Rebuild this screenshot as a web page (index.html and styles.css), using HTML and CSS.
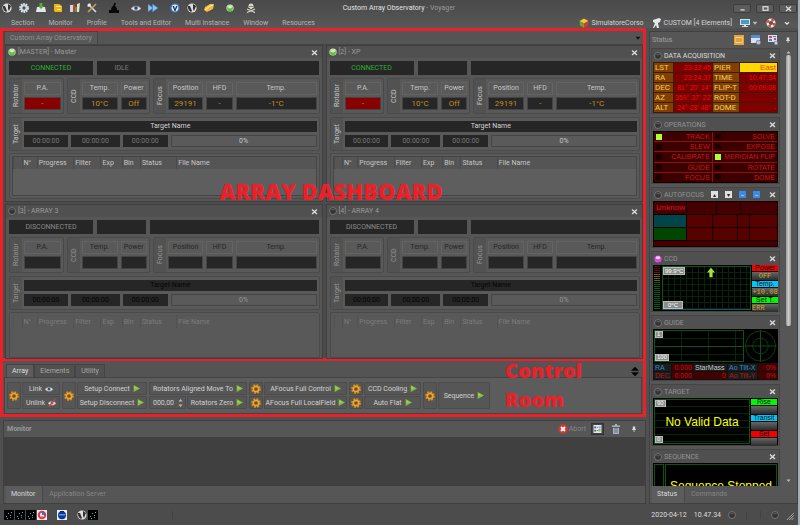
FILE: index.html
```html
<!DOCTYPE html>
<html lang="en">
<head>
<meta charset="utf-8">
<title>Custom Array Observatory - Voyager</title>
<link rel="stylesheet" href="styles.css">
</head>
<body>
<svg class="defs" aria-hidden="true">
  <symbol id="globe" viewBox="0 0 10 10"><circle cx="5" cy="5" r="4.6" fill="#ddd"/><path d="M1 3l2 0 2 5-1 1C2 8 1 6 1 4zM6 1l3 2-2 5-1-2z" fill="#333"/></symbol>
  <symbol id="blueglobe" viewBox="0 0 10 10"><circle cx="5" cy="5" r="4.8" fill="#2f6fbe"/><circle cx="5" cy="5" r="3.4" fill="#dfe9f5"/><path d="M2.500 3h1.500l1 3 1-3h1.500L5.500 8h-1z" fill="#234"/></symbol>
  <symbol id="cog" viewBox="0 0 10 10"><circle cx="5" cy="5" r="3.9" fill="none" stroke="#e6edf5" stroke-width="2" stroke-dasharray="1.6 .85"/><circle cx="5" cy="5" r="2.6" fill="none" stroke="#cfdbe8" stroke-width="1.9"/></symbol>
  <symbol id="gear" viewBox="0 0 10 10"><circle cx="5" cy="5" r="3.8" fill="none" stroke="#e08a10" stroke-width="2.2" stroke-dasharray="1.7 1.28"/><circle cx="5" cy="5" r="2.7" fill="none" stroke="#f8a41c" stroke-width="1.7"/></symbol>
  <symbol id="tray" viewBox="0 0 10 10"><path d="M1 4h8l1 5H0z" fill="#e4e6e8"/><path d="M3.500 0h3v3H8L5 6 2 3h1.500z" fill="#58a83a"/></symbol>
  <symbol id="folder" viewBox="0 0 10 10"><path d="M1 1l5 0 3 2v6H2L1 8z" fill="#f4b40c"/><path d="M3 3h5v1H3zM4 6h4v1H4z" fill="#fff1a8"/></symbol>
  <symbol id="books" viewBox="0 0 10 10"><path d="M0 2h3v7H0z" fill="#c9d8e3"/><path d="M3 1h2v8H3z" fill="#d33a28"/><path d="M5 4h2v5H5z" fill="#4b9a46"/><path d="M7 1l3-1-1 9H7z" fill="#e9dccb"/></symbol>
  <symbol id="tools" viewBox="0 0 10 10"><path d="M1 1l8 8" stroke="#ddd" stroke-width="1.600"/><path d="M9 1L1 9" stroke="#caa15a" stroke-width="1.600"/><path d="M0 3l3-3 1 2-2 2z" fill="#eee"/></symbol>
  <symbol id="dome" viewBox="0 0 10 10"><path d="M0 10V7h2C2 4 5 3 5 0h2l-1 3c2 1 2 3 2 4h2v3z" fill="#080808"/></symbol>
  <symbol id="eye" viewBox="0 0 10 10"><path d="M0 5.500C2 2 8 2 10 5.500 8 8.500 2 8.500 0 5.500z" fill="#e6e6ea" stroke="#9a6a50" stroke-width=".6"/><circle cx="5" cy="5" r="2" fill="#3f74b8"/><circle cx="5" cy="5" r=".8" fill="#112"/></symbol>
  <symbol id="noeye" viewBox="0 0 10 10"><path d="M0 5.500C2 2 8 2 10 5.500 8 8.500 2 8.500 0 5.500z" fill="#e6e6ea" stroke="#9a6a50" stroke-width=".6"/><circle cx="5" cy="5" r="1.800" fill="#3f74b8"/><path d="M1 9.500L9 .5" stroke="#d6403a" stroke-width="1.600"/></symbol>
  <symbol id="ffwd" viewBox="0 0 10 10"><path d="M0 1l5 4-5 4zM4.500 1l5.500 4-5.500 4z" fill="#8fc2f0" stroke="#3a7ec4" stroke-width=".6"/></symbol>
  <symbol id="tag" viewBox="0 0 10 10"><path d="M0 7l1-3 5-3 4 0-1 5-6 3z" fill="#f2bb3c"/><path d="M1 7l5-4 3-1" stroke="#fff2bd" fill="none"/></symbol>
  <symbol id="green" viewBox="0 0 10 10"><circle cx="5" cy="5" r="4.500" fill="#dfe9dc"/><circle cx="5" cy="5.500" r="3.600" fill="#62c332"/><ellipse cx="5" cy="3.800" rx="2.500" ry="1.700" fill="#d5f5c0"/></symbol>
  <symbol id="dark" viewBox="0 0 10 10"><circle cx="5" cy="5" r="4.300" fill="#333" stroke="#8a8a8a" stroke-width=".9"/><path d="M3 3.400h4" stroke="#6c6c6c"/></symbol>
  <symbol id="pink" viewBox="0 0 10 10"><circle cx="5" cy="5" r="4.500" fill="#d94be0"/><ellipse cx="5" cy="3.500" rx="2.800" ry="1.800" fill="#fbd3fc"/></symbol>
  <symbol id="skull" viewBox="0 0 10 10"><path d="M2.500 3a2.500 2.500 0 015 0v2H6v1H4V5H2.500z" fill="#ddd8c8"/><path d="M1 6l8 3.500M9 6L1 9.500" stroke="#ddd8c8" stroke-width="1.200"/><path d="M3.500 3h1v1h-1zM5.500 3h1v1h-1z" fill="#333"/></symbol>
  <symbol id="cube" viewBox="0 0 10 10"><path d="M5 .5L9.500 3 5 5.500.5 3z" fill="#f5c43c"/><path d="M.5 3L5 5.500V10L1 7.500z" fill="#69a82e"/><path d="M9.500 3L5 5.500V10l4-2.500z" fill="#d83b2a"/></symbol>
  <symbol id="scope" viewBox="0 0 10 10"><path d="M1 2l6-2 2 1-1 3-2 1 1 5H5L4 7l-2 3H1l2-5-2-1z" fill="#e8e8e8"/></symbol>
  <symbol id="screen" viewBox="0 0 10 10"><path d="M0 1h10v6H0z" fill="#d5e2ea"/><path d="M1 2h8v4H1z" fill="#3fa0c4"/><path d="M4 7h2v1h2v1H2V8h2z" fill="#ddd"/></symbol>
  <symbol id="buoy" viewBox="0 0 10 10"><circle cx="5" cy="5" r="3.300" fill="none" stroke="#eee" stroke-width="2.400"/><circle cx="5" cy="5" r="3.300" fill="none" stroke="#de4630" stroke-width="2.400" stroke-dasharray="2.600 2.580"/></symbol>
  <symbol id="chev" viewBox="0 0 10 10"><path d="M1.500 3.500L5 7l3.500-3.500" stroke="#eee" stroke-width="1.800" fill="none"/></symbol>
  <symbol id="x" viewBox="0 0 10 10"><path d="M1.500 2l7 6.500M8.500 2l-7 6.500" stroke="#ddd" stroke-width="1.900"/></symbol>
  <symbol id="min" viewBox="0 0 10 10"><path d="M2 7h6" stroke="#ddd" stroke-width="1.800"/></symbol>
  <symbol id="max" viewBox="0 0 10 10"><rect x="1.500" y="2.500" width="7" height="5" fill="none" stroke="#ddd" stroke-width="1.800"/></symbol>
  <symbol id="play" viewBox="0 0 10 10"><path d="M1 0l9 5-9 5z" fill="#83bd3e"/><path d="M2 2l5 3H2z" fill="#a9d86c"/></symbol>
  <symbol id="pin" viewBox="0 0 10 10"><path d="M3 1h4v4h1v1.500H5.600V10H4.400V6.500H2V5h1z" fill="#ddd"/></symbol>
  <symbol id="down" viewBox="0 0 10 10"><path d="M1 3h8L5 8z" fill="#111"/></symbol>
  <symbol id="downl" viewBox="0 0 10 10"><path d="M1 3h8L5 8z" fill="#bbb"/></symbol>
  <symbol id="upl" viewBox="0 0 10 10"><path d="M1 7h8L5 2z" fill="#bbb"/></symbol>
  <symbol id="updown" viewBox="0 0 10 12"><path d="M0 5h10L5 0zM0 7h10l-5 5z" fill="#050505"/></symbol>
  <symbol id="abort" viewBox="0 0 10 10"><circle cx="5" cy="5" r="4.900" fill="#c93a34"/><path d="M3 3l4 4M7 3L3 7" stroke="#fff" stroke-width="1.800"/></symbol>
  <symbol id="list" viewBox="0 0 10 10"><path d="M0 0h10v10H0z" fill="#dfe6f2"/><path d="M1 2h2v2H1zM1 6h2v2H1z" fill="#456"/><path d="M4 3h2M4 7h2" stroke="#567"/><path d="M7 2h2v2H7z" fill="#6b9be0"/><path d="M6 5h3v3H6z" fill="#9cbf3c"/></symbol>
  <symbol id="bin" viewBox="0 0 10 10"><path d="M1 1.500h8V3H1zM2 4h6v6H2zM4 0h2v2H4z" fill="#aab1bf"/><path d="M4 4v5M6 4v5" stroke="#5b6270" stroke-width=".8"/></symbol>
  <symbol id="orange" viewBox="0 0 10 10"><path d="M0 0h10v10H0z" fill="#e9a236"/><path d="M1.500 2h7v6h-7z" fill="#f9d58c"/><path d="M3 3v4M5 3v4M7 3v4" stroke="#b56f10"/></symbol>
  <symbol id="win" viewBox="0 0 10 10"><path d="M0 0h9v8H0z" fill="#d5e2f4"/><path d="M0 0h9v3H0z" fill="#4f8ed6"/><circle cx="7.500" cy="7.500" r="2.300" fill="#b6bfcb" stroke="#4e678b" stroke-width=".6"/></symbol>
  <symbol id="winr" viewBox="0 0 10 10"><path d="M0 0h9v7H0z" fill="#d5e2f4"/><path d="M1 1h3v2H1zM6 3h2v2H6z" fill="#d24d3d"/><path d="M5 1h3v1H5zM1 4h3v2H1z" fill="#4f7bd0"/><circle cx="8" cy="8" r="1.900" fill="#c9d2e0" stroke="#55698b" stroke-width=".6"/></symbol>
  <symbol id="stars" viewBox="0 0 10 10"><path d="M0 0h10v10H0z" fill="#020304"/><path d="M2 6h1v1H2zM4 3h1v1H4zM6 5h1v1H6z" fill="#8aa"/><path d="M3 8h1v1H3zM7 2h1v1H7z" fill="#5c7"/><path d="M6 7h1v1H6z" fill="#57c"/></symbol>
  <symbol id="gball" viewBox="0 0 10 10"><path d="M0 0h10v10H0z" fill="#f2e9ee"/><circle cx="5" cy="5" r="3.200" fill="none" stroke="#d83a48" stroke-width="2"/><path d="M5 2a3 3 0 013 3H5z" fill="#3570d0"/><path d="M3 6h3v2z" fill="#ee8a2c"/></symbol>
  <symbol id="bball" viewBox="0 0 10 10"><path d="M0 0h10v10H0z" fill="#e4f2f8"/><circle cx="5" cy="5.300" r="4" fill="#1a2fa0"/><path d="M2 4h6v1.500H2z" fill="#1fb3d8"/><path d="M3 1h4v1H3z" fill="#224"/></symbol>
</svg>

<div class="app">
  <header class="ribbon">
    <div class="titlebar">
      <div class="quick">
        <svg><use href="#globe"/></svg><svg><use href="#cog"/></svg><svg><use href="#tray"/></svg><svg><use href="#folder"/></svg><svg><use href="#books"/></svg><svg><use href="#tools"/></svg><svg class="gapped"><use href="#dome"/></svg><svg class="gapped"><use href="#eye"/></svg><svg><use href="#ffwd"/></svg><svg class="gapped"><use href="#blueglobe"/></svg><svg><use href="#globe"/></svg><svg><use href="#tag"/></svg><svg class="gapped small"><use href="#green"/></svg><svg class="gapped"><use href="#skull"/></svg>
      </div>
      <h1 class="title">Custom Array Observatory <span>- Voyager</span></h1>
      <div class="winbtns">
        <button aria-label="Minimize"><svg><use href="#min"/></svg></button>
        <button aria-label="Maximize"><svg><use href="#max"/></svg></button>
        <button aria-label="Close"><svg><use href="#x"/></svg></button>
      </div>
    </div>
    <nav class="menubar">
      <div class="menus"><a href="#">Section</a><a href="#">Monitor</a><a href="#">Profile</a><a href="#">Tools and Editor</a><a href="#">Multi Instance</a><a href="#">Window</a><a href="#">Resources</a></div>
      <div class="tools">
        <button><svg><use href="#cube"/></svg>SimulatoreCorso</button>
        <button><svg><use href="#scope"/></svg>CUSTOM [4 Elements]</button>
        <button aria-label="Display"><svg><use href="#screen"/></svg><svg class="tiny"><use href="#downl"/></svg></button>
        <button aria-label="Help"><svg><use href="#buoy"/></svg></button>
        <button aria-label="More"><svg class="tiny"><use href="#chev"/></svg></button>
      </div>
    </nav>
  </header>

  <div class="body">
    <main class="work">
      <section class="dashboard">
        <div class="doctabs"><button class="tab">Custom Array Observatory</button><svg class="tiny"><use href="#down"/></svg></div>
        <div class="panels">
          <article class="panel">
            <header class="phead"><svg><use href="#green"/></svg><h2>[MASTER] - Master</h2><button aria-label="Close"><svg><use href="#x"/></svg></button></header>
            <div class="state"><div class="box on">CONNECTED</div><div class="box idle">IDLE</div><div class="box"></div></div>
            <div class="groups">
              <div class="group rot"><span class="side">Rotator</span><div class="cells"><b>P.A.</b><i class="alert">-</i></div></div>
              <div class="group ccd"><span class="side">CCD</span><div class="cells"><b>Temp.</b><b>Power</b><i>10°C</i><i>Off</i></div></div>
              <div class="group foc"><span class="side">Focus</span><div class="cells"><b>Position</b><b>HFD</b><b>Temp.</b><i>29191</i><i>-</i><i>-1°C</i></div></div>
            </div>
            <div class="group target"><span class="side">Target</span><div class="tcells"><div class="tname">Target Name</div><i>00:00:00</i><i>00:00:00</i><i>00:00:00</i><div class="prog">0%</div></div></div>
            <div class="group seq"><table><thead><tr><th></th><th>N°</th><th>Progress</th><th>Filter</th><th>Exp</th><th>Bin</th><th>Status</th><th>File Name</th></tr></thead></table></div>
          </article>
          <article class="panel">
            <header class="phead"><svg><use href="#green"/></svg><h2>[2] - XP</h2><button aria-label="Close"><svg><use href="#x"/></svg></button></header>
            <div class="state"><div class="box on">CONNECTED</div><div class="box"></div><div class="box"></div></div>
            <div class="groups">
              <div class="group rot"><span class="side">Rotator</span><div class="cells"><b>P.A.</b><i class="alert">-</i></div></div>
              <div class="group ccd"><span class="side">CCD</span><div class="cells"><b>Temp.</b><b>Power</b><i>10°C</i><i>Off</i></div></div>
              <div class="group foc"><span class="side">Focus</span><div class="cells"><b>Position</b><b>HFD</b><b>Temp.</b><i>29191</i><i>-</i><i>-1°C</i></div></div>
            </div>
            <div class="group target"><span class="side">Target</span><div class="tcells"><div class="tname">Target Name</div><i>00:00:00</i><i>00:00:00</i><i>00:00:00</i><div class="prog">0%</div></div></div>
            <div class="group seq"><table><thead><tr><th></th><th>N°</th><th>Progress</th><th>Filter</th><th>Exp</th><th>Bin</th><th>Status</th><th>File Name</th></tr></thead></table></div>
          </article>
          <article class="panel off">
            <header class="phead"><svg><use href="#dark"/></svg><h2>[3] - ARRAY 3</h2><button aria-label="Close"><svg><use href="#x"/></svg></button></header>
            <div class="state"><div class="box">DISCONNECTED</div><div class="box"></div><div class="box"></div></div>
            <div class="groups">
              <div class="group rot"><span class="side">Rotator</span><div class="cells"><b>P.A.</b><i></i></div></div>
              <div class="group ccd"><span class="side">CCD</span><div class="cells"><b>Temp.</b><b>Power</b><i></i><i></i></div></div>
              <div class="group foc"><span class="side">Focus</span><div class="cells"><b>Position</b><b>HFD</b><b>Temp.</b><i></i><i></i><i></i></div></div>
            </div>
            <div class="group target"><span class="side">Target</span><div class="tcells"><div class="tname">Target Name</div><i>00:00:00</i><i>00:00:00</i><i>00:00:00</i><div class="prog">0%</div></div></div>
            <div class="group seq"><table><thead><tr><th></th><th>N°</th><th>Progress</th><th>Filter</th><th>Exp</th><th>Bin</th><th>Status</th><th>File Name</th></tr></thead></table></div>
          </article>
          <article class="panel off">
            <header class="phead"><svg><use href="#dark"/></svg><h2>[4] - ARRAY 4</h2><button aria-label="Close"><svg><use href="#x"/></svg></button></header>
            <div class="state"><div class="box">DISCONNECTED</div><div class="box"></div><div class="box"></div></div>
            <div class="groups">
              <div class="group rot"><span class="side">Rotator</span><div class="cells"><b>P.A.</b><i></i></div></div>
              <div class="group ccd"><span class="side">CCD</span><div class="cells"><b>Temp.</b><b>Power</b><i></i><i></i></div></div>
              <div class="group foc"><span class="side">Focus</span><div class="cells"><b>Position</b><b>HFD</b><b>Temp.</b><i></i><i></i><i></i></div></div>
            </div>
            <div class="group target"><span class="side">Target</span><div class="tcells"><div class="tname">Target Name</div><i>00:00:00</i><i>00:00:00</i><i>00:00:00</i><div class="prog">0%</div></div></div>
            <div class="group seq"><table><thead><tr><th></th><th>N°</th><th>Progress</th><th>Filter</th><th>Exp</th><th>Bin</th><th>Status</th><th>File Name</th></tr></thead></table></div>
          </article>
        </div>
        <div class="note note-dash">ARRAY DASHBOARD</div>
      </section>

      <section class="control">
        <div class="ctabs"><button class="active">Array</button><button>Elements</button><button>Utility</button><svg><use href="#updown"/></svg></div>
        <div class="actions">
          <div class="act a1"><span class="gear tall"><svg><use href="#gear"/></svg></span><button>Link <svg class="wide-icon"><use href="#eye"/></svg></button><button>Unlink <svg class="wide-icon"><use href="#noeye"/></svg></button></div>
          <div class="act a2"><span class="gear tall"><svg><use href="#gear"/></svg></span><button>Setup Connect <svg><use href="#play"/></svg></button><button>Setup Disconnect <svg><use href="#play"/></svg></button></div>
          <div class="act a3"><button class="wide">Rotators Aligned Move To <svg><use href="#play"/></svg></button><label class="spin"><input type="text" value="000,00" aria-label="Rotator angle"><span><svg><use href="#upl"/></svg><svg><use href="#downl"/></svg></span></label><button>Rotators Zero <svg><use href="#play"/></svg></button></div>
          <div class="act a4"><span class="gear"><svg><use href="#gear"/></svg></span><button>AFocus Full Control <svg><use href="#play"/></svg></button><span class="gear"><svg><use href="#gear"/></svg></span><button>AFocus Full LocalField <svg><use href="#play"/></svg></button></div>
          <div class="act a5"><span class="gear"><svg><use href="#gear"/></svg></span><button>CCD Cooling <svg><use href="#play"/></svg></button><span class="gear"><svg><use href="#gear"/></svg></span><button>Auto Flat <svg><use href="#play"/></svg></button></div>
          <div class="act a6"><span class="gear tall"><svg><use href="#gear"/></svg></span><button class="tall">Sequence <svg><use href="#play"/></svg></button></div>
        </div>
        <div class="note note-control">Control<br>Room</div>
      </section>

      <section class="monitor">
        <header><h2>Monitor</h2><button class="abort"><svg><use href="#abort"/></svg>Abort</button><button class="pressed" aria-label="Details"><svg><use href="#list"/></svg></button><button aria-label="Clear"><svg><use href="#bin"/></svg></button><button aria-label="Pin"><svg class="tiny"><use href="#pin"/></svg></button></header>
        <div class="log"></div>
        <div class="btabs"><button class="active">Monitor</button><button>Application Server</button></div>
      </section>
    </main>

    <aside class="status">
      <header class="shead"><h2>Status</h2><svg><use href="#orange"/></svg><svg><use href="#win"/></svg><svg><use href="#winr"/></svg><svg class="tiny"><use href="#pin"/></svg></header>
      <div class="scroll">
        <div class="stack">
          <section class="widget lit">
            <header><svg><use href="#dark"/></svg><h3>DATA ACQUISITION</h3><button aria-label="Close"><svg><use href="#x"/></svg></button></header>
            <table class="acq">
              <tr><th>LST</th><td>23:33:45</td><th>PIER</th><td class="east">East</td></tr>
              <tr><th>RA</th><td>23:24:37</td><th>TIME</th><td>10.47.34</td></tr>
              <tr><th>DEC</th><td>81° 20' 14"</td><th>FLIP-T</th><td>00:09:08</td></tr>
              <tr><th>AZ</th><td>359° 37' 22"</td><th>ROT-D</th><td>-</td></tr>
              <tr><th>ALT</th><td>24° 28' 48"</td><th>DOME</th><td>-</td></tr>
            </table>
          </section>
          <section class="widget">
            <header><svg><use href="#dark"/></svg><h3>OPERATIONS</h3><button aria-label="Close"><svg><use href="#x"/></svg></button></header>
            <ul class="ops"><li class="hot">TRACK</li><li>SOLVE</li><li>SLEW</li><li>EXPOSE</li><li>CALIBRATE</li><li class="hot">MERIDIAN FLIP</li><li>GUIDE</li><li>ROTATE</li><li>FOCUS</li><li>DOME</li></ul>
          </section>
          <section class="widget">
            <header><svg><use href="#dark"/></svg><h3>AUTOFOCUS</h3><span class="chips"><em>▴</em><em>▾</em><em class="blue">–</em><em class="blue">–</em></span><button aria-label="Close"><svg><use href="#x"/></svg></button></header>
            <div class="af">
              <div class="r1"><span>Unknow</span><span></span><span></span><span></span></div>
              <div class="r2"><span class="teal"></span><span></span><span></span><span></span><span></span></div>
              <div class="r2"><span class="grn"></span><span></span><span></span><span></span><span></span></div>
              <div class="r3"></div>
            </div>
          </section>
          <section class="widget">
            <header><svg><use href="#pink"/></svg><h3>CCD</h3><button aria-label="Close"><svg><use href="#x"/></svg></button></header>
            <div class="ccdview">
              <div class="meter"></div>
              <div class="plot"><span class="lab">99.9°C</span><svg class="arrow" viewBox="0 0 10 12"><path d="M5 0l5 6H7v6H3V6H0z" fill="#a8e03a"/></svg><span class="lab low">0°C</span></div>
              <div class="keys"><span class="red">Power</span><span class="lcd">OFF</span><span class="cyan">Temp.</span><span class="lcd">+10.08</span><span class="lime">Set T.</span><span class="lcd left">ERR</span></div>
            </div>
          </section>
          <section class="widget">
            <header><svg><use href="#dark"/></svg><h3>GUIDE</h3><button aria-label="Close"><svg><use href="#x"/></svg></button></header>
            <div class="guide">
              <div class="gplots">
                <div class="gplot"><span class="lab">1</span><span class="lab">100</span></div>
                <svg viewBox="0 0 33 33"><path d="M0 16.500h33M16.500 0v33" stroke="#0b5512"/><g fill="none" stroke="#0a4010"><circle cx="16.500" cy="16.500" r="8"/><circle cx="16.500" cy="16.500" r="15.500"/></g></svg>
              </div>
              <table><tr><td class="ra">RA</td><td class="v">0.000</td><td class="sm">StarMass</td><td class="ra">Ao Tilt-X</td><td class="v">0%</td></tr><tr><td class="de">DEC</td><td class="v">0.000</td><td class="v">0</td><td class="de">Ao Tilt-Y</td><td class="v">0%</td></tr></table>
            </div>
          </section>
          <section class="widget">
            <header><svg><use href="#dark"/></svg><h3>TARGET</h3><button aria-label="Close"><svg><use href="#x"/></svg></button></header>
            <div class="tgt">
              <div class="tplot"><span class="lab">90</span><strong>No Valid Data</strong><span class="lab">0</span></div>
              <div class="keys"><span class="lime">Rise</span><span class="lcd"></span><span class="cyan">Transit</span><span class="lcd"></span><span class="red">Set</span><span class="lcd"></span></div>
            </div>
          </section>
          <section class="widget">
            <header><svg><use href="#dark"/></svg><h3>SEQUENCE</h3><button aria-label="Close"><svg><use href="#x"/></svg></button></header>
            <div class="sq"><span></span><strong>Sequence Stopped</strong></div>
          </section>
        </div>
        <div class="bar"><svg><use href="#upl"/></svg><div class="rail"><span class="thumb"></span></div><svg><use href="#downl"/></svg></div>
      </div>
      <div class="btabs"><button class="active">Status</button><button>Commands</button></div>
    </aside>
  </div>

  <footer class="foot">
    <div class="fleft"><svg><use href="#stars"/></svg><svg><use href="#stars"/></svg><svg><use href="#stars"/></svg><svg><use href="#gball"/></svg><svg class="far"><use href="#bball"/></svg><svg class="far"><use href="#globe"/></svg><svg><use href="#stars"/></svg></div>
    <span class="sep"></span>
    <div class="fright"><time>2020-04-12</time><time>10.47.34</time><svg><use href="#dark"/></svg><span class="sep"></span><span class="sep"></span><svg><use href="#dark"/></svg><svg class="grip" viewBox="0 0 10 10"><path d="M1 10l9-9M4 10l6-6M7 10l3-3" stroke="#bbb"/></svg></div>
  </footer>
</div>
</body>
</html>
```
FILE: styles.css
```css
* { box-sizing: border-box; }
body { margin: 0; background: #505050; color: #c6c6c6; font: 7px/10px Roboto, "Liberation Sans", sans-serif; }
h1, h2, h3, ul { margin: 0; padding: 0; font: inherit; list-style: none; }
button, input { margin: 0; padding: 0; border: 0; background: none; color: inherit; font: inherit; }
a { color: inherit; text-decoration: none; }
b, i, em, strong { font-weight: 400; font-style: normal; }
svg { display: block; width: 10px; height: 10px; flex: none; }
svg.tiny { width: 6px; height: 6px; }
.defs { position: absolute; width: 0; height: 0; }
table { border-collapse: collapse; }

.app { height: 100vh; min-height: 525px; display: flex; flex-direction: column; border-right: 2px solid #a8adb2; overflow: hidden; background: #505050; }
.ribbon { height: 28px; background: linear-gradient(#494949, #585858); }
.titlebar { display: grid; grid-template-columns: 1fr auto 1fr; height: 16px; align-items: center; }
.quick { display: flex; align-items: center; gap: 8px; padding-left: 2px; }
.quick svg { margin-right: -1px; }
.quick .gapped { margin-left: 5px; }
.quick .small { width: 8px; height: 8px; }
.title { color: #e2e2e2; }
.title span { color: #999; }
.winbtns { display: flex; justify-content: flex-end; gap: 5px; padding-right: 1px; }
.winbtns button { display: grid; place-items: center; width: 18px; height: 9px; border: 1px solid #3e3e3e; border-radius: 2px; background: #5c5c5c; }
.winbtns svg { width: 7px; height: 7px; }
.menubar { display: flex; justify-content: space-between; align-items: center; height: 13px; color: #b4b4b4; }
.menus { display: flex; gap: 14px; padding-left: 11px; }
.tools { display: flex; align-items: center; gap: 8px; padding-right: 8px; color: #d4d4d4; }
.tools button { display: flex; align-items: center; gap: 2px; }

.body { flex: 1; min-height: 0; display: flex; gap: 3px; }
.work { flex: 1; min-width: 0; display: flex; flex-direction: column; }

.dashboard { position: relative; height: 333px; border: 3px solid #ec2028; padding-left: 1px; background: #4b4b4b; }
.doctabs { display: flex; justify-content: space-between; align-items: center; height: 14px; padding-right: 2px; background: #545454; border-bottom: 1px solid #444; color: #929292; }
.tab { height: 13px; padding: 0 5px; border: 1px solid #454545; border-bottom: 0; background: #585858; }
.panels { display: grid; grid-template-columns: 1fr 1fr; grid-template-rows: 157px 155px; gap: 2px 3px; padding-left: 1px; }
.panel { border: 1px solid #3f3f3f; background: #565656; padding: 0 2px 0 3px; min-width: 0; display: flex; flex-direction: column; overflow: hidden; }
.phead { display: flex; align-items: center; gap: 2px; height: 12px; margin: 0 -2px 0 -3px; padding: 0 4px 0 2px; background: #505050; color: #9a9a9a; }
.phead svg { width: 8px; height: 8px; }
.phead h2 { flex: 1; }
.phead button svg { width: 7px; height: 7px; }
.state { display: grid; grid-template-columns: 84fr 49fr 169fr; gap: 4px; margin-top: 3px; }
.box { height: 14px; background: #262626; color: #7c7c7c; text-align: center; line-height: 14px; }
.box.on { color: #2fae3a; }
.groups { display: grid; grid-template-columns: 55fr 84fr 168fr; gap: 3px; margin-top: 3px; }
.group { display: flex; border: 1px solid #4a4a4a; border-radius: 2px; padding: 3px 2px 3px 0; background: #595959; min-width: 0; }
.side { display: grid; place-items: center; flex: none; width: 12px; margin: -3px 2px -3px 0; background: #525252; line-height: 12px; writing-mode: vertical-rl; transform: rotate(180deg); }
.cells { flex: 1; display: grid; gap: 2px 3px; }
.cells b { height: 13px; border: 1px solid #636363; text-align: center; line-height: 11px; }
.cells i { height: 13px; border: 1px solid #444; background: #262626; color: #c08d20; text-align: center; font-size: 8px; line-height: 11px; }
.cells .alert { background: #890000; }
.ccd .cells { grid-template-columns: 37fr 27fr; }
.foc .cells { grid-template-columns: 36fr 27fr 82fr; }
.target { margin-top: 3px; }
.tcells { flex: 1; display: grid; grid-template-columns: 44fr 49fr 45fr 146fr; gap: 3px; }
.tname { grid-column: 1 / -1; height: 11px; background: #262626; color: #d4d4d4; text-align: center; line-height: 11px; }
.tcells i { height: 12px; background: #262626; color: #7a7a7a; text-align: center; line-height: 12px; }
.prog { border: 1px solid #454545; border-radius: 1px; background: #5a5a5a; text-align: center; line-height: 10px; }
.seq { height: 46px; margin-top: 2px; padding: 2px; }
.seq table { width: 100%; height: 40px; table-layout: fixed; border: 1px solid #464646; background: #5e5e5e; }
.seq tr { vertical-align: top; }
.seq th { padding: 0 0 0 2px; text-align: left; font-weight: 400; line-height: 12px; background: linear-gradient(#4a4a4a, #4a4a4a) 0 0 / 1px 12px no-repeat, linear-gradient(#555, #555) 0 0 / 100% 12px no-repeat; white-space: nowrap; }
.seq th:nth-child(1) { width: 3%; }
.seq th:nth-child(2) { width: 5%; }
.seq th:nth-child(3) { width: 12%; }
.seq th:nth-child(4) { width: 9%; }
.seq th:nth-child(5) { width: 7%; }
.seq th:nth-child(6) { width: 6%; }
.seq th:nth-child(7) { width: 12%; }
.off .box { color: #8c8c8c; }
.off .side, .off .prog { color: #949494; }
.off .cells b { color: #262626; }
.off .tname, .off .tcells i { color: #050505; }
.off .seq table { border-color: #565656; background: #595959; }
.off .seq th { color: #7c7c7c; background: linear-gradient(#525252, #525252) 0 0 / 1px 12px no-repeat; }

.note { position: absolute; color: #ec2028; font-family: "Open Sans", "Noto Sans", sans-serif; font-weight: 800; pointer-events: none; white-space: nowrap; }
.note-dash { left: 0; right: 0; top: 146px; padding-left: 16px; text-align: center; font-size: 22px; line-height: 28px; }
.note-control { right: 61px; top: -5px; font-size: 20px; line-height: 29px; }

.control { position: relative; height: 56px; padding: 1px; border: 3px solid #ec2028; border-top: 0; background: #545454; }
.ctabs { display: flex; align-items: flex-end; height: 15px; padding: 0 3px 0 2px; color: #a8a8a8; }
.ctabs button { height: 13px; padding: 0 5px; border: 1px solid #444; border-bottom: 0; background: #505050; }
.ctabs .active { background: #5c5c5c; color: #ddd; }
.ctabs svg { width: 8px; height: 11px; margin-left: auto; }
.actions { display: flex; gap: 2px; height: 37px; padding: 4px 2px; border: 1px solid #444; background: #5c5c5c; color: #d2d2d2; }
.act { display: grid; grid-template-rows: 13px 13px; grid-template-columns: 14px 1fr; gap: 1px; }
.act > * { border: 1px solid #4b4b4b; border-radius: 1px; background: #565656; }
.act button { display: flex; align-items: center; justify-content: center; gap: 3px; min-width: 0; white-space: nowrap; }
.act button svg { width: 7px; height: 7px; }
.act button .wide-icon { width: 8px; height: 8px; }
.gear { display: grid; place-items: center; }
.act .tall { grid-row: 1 / 3; }
.a1 { width: 53px; }
.a2 { width: 85px; }
.a3 { width: 98px; grid-template-columns: 37px 1fr; }
.a3 .wide { grid-column: 1 / 3; }
.a4 { width: 98px; }
.a5 { width: 72px; }
.a6 { width: 67px; }
.spin { display: flex; align-items: center; padding: 0 2px 0 3px; }
.spin input { flex: 1; min-width: 0; width: 20px; }
.spin svg { width: 5px; height: 5px; }

.monitor { flex: 1; min-height: 0; margin: 3px 0 0 3px; display: flex; flex-direction: column; border: 1px solid #404040; background: #565656; }
.monitor header { display: flex; align-items: center; height: 16px; gap: 5px; padding: 0 5px 0 3px; color: #999; }
.monitor h2 { flex: 1; font-weight: 700; }
.abort { display: flex; align-items: center; gap: 1px; color: #858585; }
.monitor header button:not(.abort) { display: grid; place-items: center; width: 13px; height: 12px; }
.monitor header .pressed { width: 15px; border: 1px solid #333; background: #444; }
.monitor header .pressed svg { width: 9px; height: 8px; }
.log { flex: 1; background: #404040; }
.btabs { display: flex; height: 17px; flex: none; padding-left: 2px; color: #858585; }
.btabs button { padding: 0 6px; line-height: 15px; }
.btabs .active { padding: 0 7px 0 5px; background: #5c5c5c; color: #d8d8d8; border-right: 1px solid #484848; }

.status { width: 149px; flex: none; display: flex; flex-direction: column; border: 1px solid #404040; background: #565656; margin-top: 3px; min-height: 0; }
.shead { display: flex; align-items: center; gap: 7px; height: 15px; flex: none; padding: 0 6px 0 2px; color: #8d8d8d; }
.shead h2 { flex: 1; font-weight: 700; }
.scroll { flex: 1; min-height: 0; display: flex; justify-content: space-between; }
.stack { width: 130px; overflow: hidden; padding: 1px 0 0 1px; display: flex; flex-direction: column; gap: 3px; }
.widget { flex: none; border: 1px solid #454545; background: #505050; padding: 0 1px; }
.widget > header { display: flex; align-items: center; gap: 2px; height: 13px; padding: 0 2px 0 1px; color: #929292; }
.lit > header { color: #ddd; }
.widget header svg { width: 8px; height: 8px; }
.widget header button svg { width: 7px; height: 7px; }
.widget h3 { flex: 1; }
.acq, .ops, .af, .guide table { font-family: "Liberation Sans", sans-serif; }
.acq { width: 100%; background: #272727; table-layout: fixed; }
.acq th, .acq td { height: 10px; padding: 0 1px; border: 1px solid #3c1a10; line-height: 9px; white-space: nowrap; }
.acq th { width: 20px; background: #824000; color: #f3cf62; text-align: left; font: 8px/9px Roboto, sans-serif; }
.acq th:nth-child(3) { width: 27px; }
.acq td:nth-child(2) { width: 39px; }
.acq td { background: #800000; color: #e01010; text-align: right; font-size: 7px; overflow: hidden; }
.acq .east { background: #ffd800; color: #f04010; font-size: 8px; }
.ops { display: grid; grid-template-columns: 59fr 66fr; gap: 1px; background: #8a1010; border: 1px solid #100; height: 52px; }
.ops li { display: flex; align-items: center; justify-content: space-between; padding: 0 2px; background: #3c0000; color: #d01414; line-height: 9px; }
.ops li::before { content: ""; width: 6px; height: 6px; background: #1c0000; }
.ops .hot::before { background: #adff2f; }
.chips { display: flex; gap: 7px; margin-right: 7px; }
.chips em { width: 7px; height: 7px; background: #e0e0e0; color: #222; font-size: 6px; line-height: 7px; text-align: center; }
.chips .blue { background: #3a8be8; color: #fff; }
.af { display: grid; grid-template-rows: 12px 12px 12px 5px; gap: 1px; padding: 1px; background: #120000; }
.af div { display: grid; gap: 1px; }
.af span { background: #440000; }
.af .r1 { grid-template-columns: 33fr 30fr 23fr 37fr; color: #d81818; line-height: 12px; font-size: 8px; }
.af .r1 span:first-child { padding-left: 2px; }
.af .r2 { grid-template-columns: 33fr 26fr 25fr 11fr 28fr; }
.af .r2 span { background: #560000; }
.af .r2 .teal { background: #00454a; }
.af .r2 .grn { background: #004500; }
.af .r3 { background: #440000; }
.ccdview, .tgt { display: flex; height: 46px; background: #000; }
.meter { width: 6px; margin: 1px; background: repeating-linear-gradient(transparent 0 1px, #000 1px 2px), linear-gradient(#601010 0 15%, #6a6010 15% 35%, #0a5a14 35%); }
.plot { flex: 1; margin: 1px; position: relative; display: flex; flex-direction: column; justify-content: space-between; background: repeating-linear-gradient(90deg, transparent 0 5px, #052409 5px 6px), repeating-linear-gradient(transparent 0 5px, #052409 5px 6px), #000; border: 1px solid #0b5512; border-bottom-color: #14566c; }
.lab { align-self: flex-start; min-width: 8px; padding: 0 1px; background: #8b8b8b; border: 1px solid #bbb; color: #fff; font: 6px/5px "Liberation Sans", sans-serif; }
.plot .lab { min-width: 20px; text-align: center; line-height: 6px; }
.arrow { position: absolute; left: 50%; top: 0; width: 8px; height: 11px; }
.keys { width: 26px; flex: none; display: grid; grid-template-rows: repeat(3, 6px 8px); gap: 1px 0; }
.keys span { color: #101010; font: 7px/6px "Liberation Sans", sans-serif; text-align: center; white-space: nowrap; }
.keys .red { background: #f00000; }
.keys .cyan { background: #00c8ff; }
.keys .lime { background: #00f800; }
.keys .lcd { background: linear-gradient(#666, #2c2c2c); color: #d9a520; font: 7px/8px "Liberation Mono", monospace; }
.keys .left { text-align: left; }
.guide { background: #000; }
.gplots { display: flex; height: 34px; padding: 1px; }
.gplots svg { width: 33px; height: 32px; }
.gplot { flex: 1; display: flex; flex-direction: column; justify-content: space-between; border: 1px solid #0b5512; background: linear-gradient(transparent 15px, #0b5512 15px 16px, transparent 16px), repeating-linear-gradient(90deg, transparent 0 26px, #062808 26px 27px), repeating-linear-gradient(transparent 0 7px, #062808 7px 8px); }
.guide table { width: 100%; table-layout: fixed; }
.guide td { height: 8px; padding: 0 1px; border: 1px solid #111; background: #1c1c1c; line-height: 7px; white-space: nowrap; }
.guide .ra { color: #1f8fd0; }
.guide .de { color: #b01818; }
.guide .v { background: #420000; color: #c41414; text-align: right; }
.guide .sm { color: #ccc; }
.guide td:nth-child(1) { width: 18px; }
.guide td:nth-child(2) { width: 22px; }
.guide td:nth-child(3) { width: 34px; }
.guide td:nth-child(4) { width: 30px; }
.tgt { height: 47px; padding: 1px; }
.tplot { flex: 1; margin-right: 1px; display: flex; flex-direction: column; justify-content: space-between; border: 1px solid #0b5512; background: repeating-linear-gradient(transparent 0 6px, #062808 6px 7px); }
.tplot strong { align-self: center; }
.tplot strong, .sq strong { color: #ffff00; font: 12px/16px "Liberation Sans", sans-serif; white-space: nowrap; }
.sq { display: flex; height: 47px; padding: 1px; gap: 1px; background: #000; }
.sq span { width: 10px; border: 1px solid #0b5512; }
.sq strong { flex: 1; padding-top: 13px; border: 1px solid #0b5512; text-align: center; }
.bar { width: 14px; display: flex; flex-direction: column; align-items: center; padding: 3px 0; margin-right: 2px; }
.bar svg { width: 5px; height: 5px; }
.rail { flex: 1; width: 5px; }
.thumb { display: block; height: 64%; border-radius: 2px; background: linear-gradient(90deg, #999, #ccc, #999); }

.foot { display: flex; align-items: center; height: 21px; flex: none; padding: 0 4px; background: #4c4c4c; }
.fleft { display: flex; gap: 1px; width: 168px; }
.fleft .far { margin-left: 9px; }
.sep { width: 1px; height: 8px; background: #424242; }
.fright { display: flex; align-items: center; gap: 7px; margin-left: auto; color: #ddd; }
.fright svg { width: 8px; height: 8px; }
.fright .sep { margin: 0 3px; }
.fright .grip { align-self: flex-end; }
```
